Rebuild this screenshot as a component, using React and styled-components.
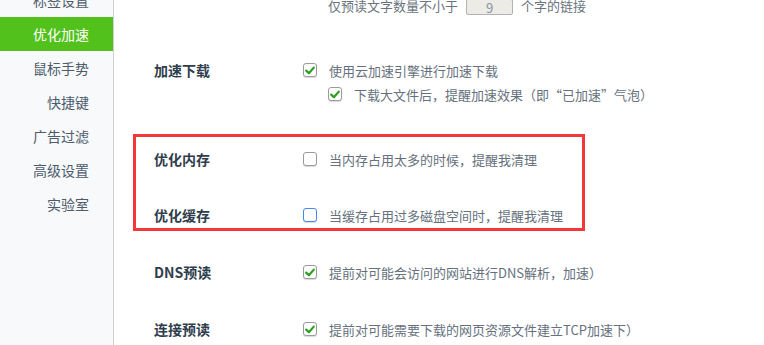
import styled, { createGlobalStyle } from 'styled-components';

const GlobalStyle = createGlobalStyle`
  html, body {
    margin: 0;
    padding: 0;
    background: #ffffff;
    overflow: hidden;
  }
  body {
    font-family: "Microsoft YaHei", "Noto Sans CJK SC", "Noto Sans", sans-serif;
  }
`;

const Page = styled.div`
  display: flex;
  width: 764px;
  height: 345px;
  overflow: hidden;
`;

const Sidebar = styled.nav`
  width: 113px;
  flex: none;
  background: #f7f9fb;
  border-right: 1px solid #cfd0d3;
  display: flex;
  flex-direction: column;
`;

const NavList = styled.ul`
  list-style: none;
  margin: -17px 0 0;
  padding: 0;
`;

const NavItem = styled.li`
  height: 34px;
  display: flex;
  align-items: center;
  justify-content: flex-end;
  padding-right: 24px;
  font-size: 14px;
  color: ${p => (p.$active ? '#ffffff' : '#4d5b6b')};
  background: ${p => (p.$active ? '#52c11b' : 'transparent')};
`;

const Content = styled.main`
  flex: 1;
  padding-left: 40px;
  display: flex;
  flex-direction: column;
`;

const TopLine = styled.div`
  margin-top: -4px;
  margin-left: 174px;
  height: 18px;
  display: flex;
  align-items: center;
  gap: 8px;
  font-size: 13px;
  color: #6a7480;
`;

const NumBox = styled.span`
  width: 47px;
  height: 16px;
  margin-top: 4px;
  box-sizing: border-box;
  border: 1px solid #b4b4ae;
  border-radius: 2px;
  background: #ecebe5;
  color: #8a96a2;
  font-size: 13px;
  display: flex;
  align-items: center;
  justify-content: center;
`;

const Row = styled.div`
  display: flex;
  align-items: center;
  height: 20px;
  margin-top: ${p => p.$gap}px;
`;

const Label = styled.div`
  width: 149px;
  flex: none;
  font-size: 14px;
  font-weight: 700;
  color: #2f3d4c;
`;

const Option = styled.div`
  display: flex;
  align-items: center;
  gap: 12px;
  margin-left: ${p => p.$indent || 0}px;
  font-size: 13px;
  color: #66717d;
  white-space: nowrap;
`;

const Box = styled.span`
  width: 14px;
  height: 14px;
  box-sizing: border-box;
  flex: none;
  border: 1px solid ${p => (p.$focus ? '#4a85ee' : '#9b9b9b')};
  border-radius: 3px;
  background: #fff;
  box-shadow: 0 1px 1px rgba(0, 0, 0, 0.15);
  display: flex;
  align-items: center;
  justify-content: center;
`;

const Highlight = styled.div`
  margin-top: 30px;
  margin-left: -21px;
  width: 452px;
  box-sizing: border-box;
  border: 3px solid #f2383a;
  padding: 12px 0 3px 18px;
`;

const Check = () => (
  <svg width="10" height="9" viewBox="0 0 10 9">
    <path d="M1.2 4.6 L3.9 7.2 L8.8 1.6" fill="none" stroke="#2aa11d" strokeWidth="2.2" strokeLinecap="round" strokeLinejoin="round" />
  </svg>
);

const CheckBox = ({ checked, focus }) => <Box $focus={focus}>{checked && <Check />}</Box>;

const navItems = ['标签设置', '优化加速', '鼠标手势', '快捷键', '广告过滤', '高级设置', '实验室'];

export default function App() {
  return (
    <Page>
      <GlobalStyle />
      <Sidebar>
        <NavList>
          {navItems.map(n => (
            <NavItem key={n} $active={n === '优化加速'}>{n}</NavItem>
          ))}
        </NavList>
      </Sidebar>
      <Content>
        <TopLine>
          仅预读文字数量不小于
          <NumBox>9</NumBox>
          个字的链接
        </TopLine>
        <Row $gap={46}>
          <Label>加速下载</Label>
          <Option><CheckBox checked />使用云加速引擎进行加速下载</Option>
        </Row>
        <Row $gap={4}>
          <Label />
          <Option $indent={25}><CheckBox checked />下载大文件后，提醒加速效果（即“已加速”气泡）</Option>
        </Row>
        <Highlight>
          <Row $gap={0}>
            <Label>优化内存</Label>
            <Option><CheckBox />当内存占用太多的时候，提醒我清理</Option>
          </Row>
          <Row $gap={36}>
            <Label>优化缓存</Label>
            <Option><CheckBox focus />当缓存占用过多磁盘空间时，提醒我清理</Option>
          </Row>
        </Highlight>
        <Row $gap={31}>
          <Label>DNS预读</Label>
          <Option><CheckBox checked />提前对可能会访问的网站进行DNS解析，加速）</Option>
        </Row>
        <Row $gap={37}>
          <Label>连接预读</Label>
          <Option><CheckBox checked />提前对可能需要下载的网页资源文件建立TCP加速下）</Option>
        </Row>
      </Content>
    </Page>
  );
}
